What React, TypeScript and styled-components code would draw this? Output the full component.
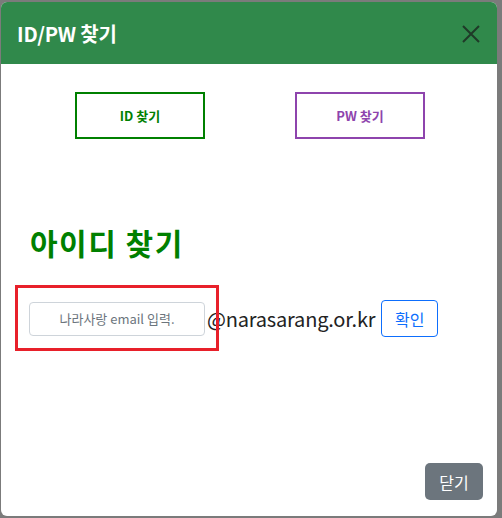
import React from "react";
import styled, { createGlobalStyle } from "styled-components";

const Global = createGlobalStyle`
  html, body { margin: 0; padding: 0; background: #7b7b7b; }
  body { font-family: "Noto Sans CJK KR", "Noto Sans", sans-serif; }
  * { box-sizing: border-box; }
`;

const Backdrop = styled.div`
  width: 502px;
  height: 518px;
  padding: 2px 5px 2px 1px;
`;

const Modal = styled.div`
  width: 496px;
  height: 514px;
  background: #fff;
  border-radius: 6px;
  overflow: hidden;
  display: flex;
  flex-direction: column;
`;

const Header = styled.div`
  height: 62px;
  background: #30894b;
  display: flex;
  align-items: center;
  justify-content: space-between;
  padding: 0 14px 0 16px;
`;

const Title = styled.h1`
  margin: 0;
  color: #fff;
  font-size: 20px;
  font-weight: 700;
  letter-spacing: -0.2px;
`;

const CloseBtn = styled.button`
  background: none;
  border: none;
  padding: 0;
  width: 24px;
  height: 24px;
  display: flex;
  align-items: center;
  justify-content: center;
  margin-top: 2px;
`;

const Body = styled.div`
  flex: 1;
  display: flex;
  flex-direction: column;
  padding: 28px 14px 16px 14px;
`;

const TabRow = styled.div`
  display: flex;
  gap: 90px;
  padding-left: 60px;
`;

const TabButton = styled.button<{ $color: string }>`
  width: 130px;
  height: 47px;
  background: #fff;
  border: 2px solid ${(p) => p.$color};
  color: ${(p) => p.$color};
  font-family: inherit;
  font-size: 13px;
  font-weight: 700;
  padding: 0;
`;

const Heading = styled.h2`
  margin: 85px 0 0 15px;
  color: #008000;
  font-size: 30px;
  line-height: 36px;
  font-weight: 700;
  letter-spacing: 1.5px;
`;

const FormArea = styled.div`
  position: relative;
  margin-top: 40px;
  display: flex;
  align-items: center;
  padding-left: 14px;
  height: 37px;
`;

const Highlight = styled.div`
  position: absolute;
  left: 0;
  top: -15px;
  width: 204px;
  height: 66px;
  border: 3px solid #e8202a;
  pointer-events: none;
`;

const EmailInput = styled.input`
  width: 176px;
  height: 34px;
  border: 1px solid #ced4da;
  border-radius: 4px;
  text-align: center;
  font-family: inherit;
  font-size: 13px;
  color: #212529;
  padding: 0 8px;
  &::placeholder { color: #6c757d; }
`;

const Domain = styled.span`
  margin-left: 2px;
  font-size: 20px;
  color: #222;
  letter-spacing: -0.2px;
`;

const ConfirmBtn = styled.button`
  margin-left: 6px;
  height: 37px;
  width: 57px;
  background: #fff;
  border: 1px solid #0d6efd;
  border-radius: 4px;
  color: #0d6efd;
  font-family: inherit;
  font-size: 16px;
  padding: 0;
`;

const Footer = styled.div`
  margin-top: auto;
  display: flex;
  justify-content: flex-end;
`;

const CloseFooterBtn = styled.button`
  width: 58px;
  height: 37px;
  background: #6c757d;
  border: none;
  border-radius: 5px;
  color: #fff;
  font-family: inherit;
  font-size: 16px;
  padding: 0;
`;

export default function App() {
  return (
    <>
      <Global />
      <Backdrop>
        <Modal>
          <Header>
            <Title>ID/PW 찾기</Title>
            <CloseBtn aria-label="close">
              <svg width="18" height="18" viewBox="0 0 18 18">
                <path d="M1 1 L17 17 M17 1 L1 17" stroke="#1f3a28" strokeWidth="2" />
              </svg>
            </CloseBtn>
          </Header>
          <Body>
            <TabRow>
              <TabButton $color="#008000">ID 찾기</TabButton>
              <TabButton $color="#8e44ad">PW 찾기</TabButton>
            </TabRow>
            <Heading>아이디 찾기</Heading>
            <FormArea>
              <EmailInput placeholder="나라사랑 email 입력." />
              <Domain>@narasarang.or.kr</Domain>
              <ConfirmBtn>확인</ConfirmBtn>
              <Highlight />
            </FormArea>
            <Footer>
              <CloseFooterBtn>닫기</CloseFooterBtn>
            </Footer>
          </Body>
        </Modal>
      </Backdrop>
    </>
  );
}
